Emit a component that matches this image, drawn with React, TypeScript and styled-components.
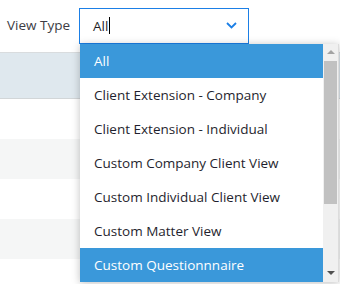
import styled, {createGlobalStyle} from "styled-components";

const Global = createGlobalStyle`
    html, body {
        margin: 0;
        padding: 0;
        background: #fff;
        overflow: hidden;
    }
    body {
        font-family: "Open Sans", "Noto Sans", sans-serif;
        width: 340px;
        height: 284px;
    }
`

const Page = styled.div`
    position: relative;
    width: 340px;
    height: 284px;
    overflow: hidden;
`

const Toolbar = styled.div`
    display: flex;
    align-items: flex-start;
    height: 53px;
    padding: 8px 0 0 7px;
    box-sizing: border-box;
    border-bottom: 1px solid #d9dcde;
`

const Label = styled.div`
    font-size: 13.5px;
    line-height: 34px;
    color: #3c3c44;
    width: 72px;
`

const Select = styled.div`
    position: relative;
    width: 170px;
    height: 36px;
    box-sizing: border-box;
    border: 1px solid #1b7fe6;
    display: flex;
    align-items: center;
    padding: 0 0 1px 13px;
    font-size: 13.5px;
    color: #1f1f28;
`

const Caret = styled.span`
    display: inline-block;
    width: 1px;
    height: 17px;
    background: #000;
    margin-left: 1px;
`

const Chevron = styled.svg`
    position: absolute;
    right: 11px;
    top: 13px;
`

const Table = styled.div`
    display: flex;
    flex-direction: column;
`

const Row = styled.div<{ $bg: string; $h: number }>`
    height: ${p => p.$h}px;
    background: ${p => p.$bg};
    box-sizing: border-box;
`

const HeadRow = styled(Row)`
    border-bottom: 1px solid #d2d6d8;
`

const Menu = styled.div`
    position: absolute;
    left: 80px;
    top: 44px;
    width: 258px;
    height: 238px;
    display: flex;
    background: #fff;
    box-shadow: 0 1px 8px rgba(0, 0, 0, 0.25);
    border-right: 1px solid #dcdcdc;
`

const List = styled.div`
    flex: 1;
    display: flex;
    flex-direction: column;
`

const Item = styled.div<{ $active?: boolean }>`
    height: 34px;
    flex-shrink: 0;
    display: flex;
    align-items: center;
    padding-left: 14px;
    font-size: 13.5px;
    color: ${p => p.$active ? '#fff' : '#1f1f2e'};
    background: ${p => p.$active ? '#3a98da' : 'transparent'};
`

const Scrollbar = styled.div`
    width: 15px;
    background: #f0f0f0;
    display: flex;
    flex-direction: column;
    align-items: center;
`

const Arrow = styled.div<{ $up?: boolean }>`
    width: 0;
    height: 0;
    border-left: 4px solid transparent;
    border-right: 4px solid transparent;
    ${p => p.$up
        ? 'border-bottom: 4px solid #a3a3a3; margin-top: 6px;'
        : 'border-top: 4px solid #505050; margin-bottom: 7px;'}
`

const Thumb = styled.div`
    width: 13px;
    height: 143px;
    margin-top: 7px;
    background: #c1c1c1;
`

const Spacer = styled.div`
    flex: 1;
`

const items = [
    'All',
    'Client Extension - Company',
    'Client Extension - Individual',
    'Custom Company Client View',
    'Custom Individual Client View',
    'Custom Matter View',
    'Custom Questionnnaire',
]

const rows = ['#fff', '#f5f6f6', '#fff', '#f5f6f6', '#fff']

export default function App() {
    return (
        <Page>
            <Global/>
            <Toolbar>
                <Label>View Type</Label>
                <Select>
                    All<Caret/>
                    <Chevron width="11" height="7" viewBox="0 0 11 7">
                        <path d="M1 1l4.5 4.5L10 1" fill="none" stroke="#1b7fe6" strokeWidth="1.8"/>
                    </Chevron>
                </Select>
            </Toolbar>
            <Table>
                <HeadRow $bg={'#dfe8ee'} $h={46}/>
                {rows.map((bg, i) => <Row key={i} $bg={bg} $h={40}/>)}
            </Table>
            <Menu>
                <List>
                    {items.map((t, i) => (
                        <Item key={t} $active={i === 0 || i === items.length - 1}>{t}</Item>
                    ))}
                </List>
                <Scrollbar>
                    <Arrow $up/>
                    <Thumb/>
                    <Spacer/>
                    <Arrow/>
                </Scrollbar>
            </Menu>
        </Page>
    )
}
